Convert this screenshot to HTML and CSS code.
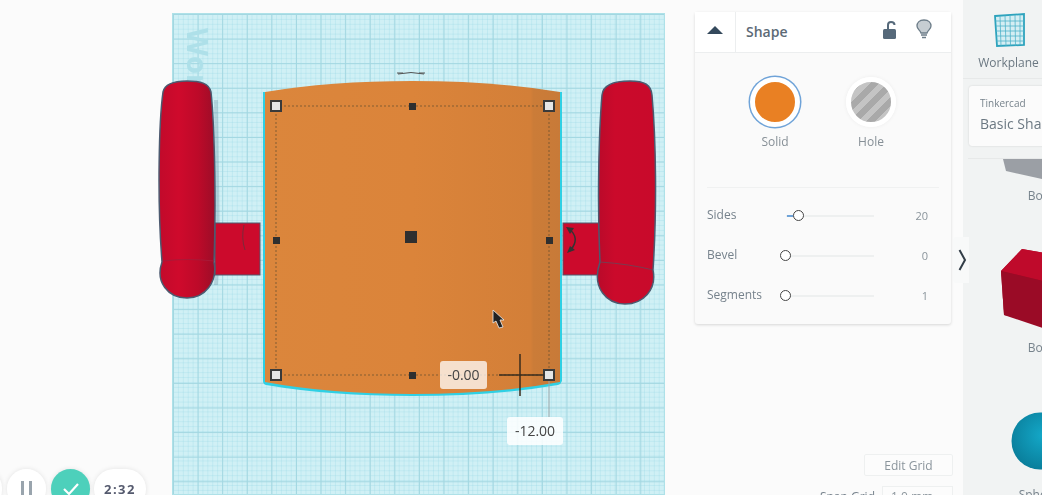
FILE: index.html
```html
<!DOCTYPE html>
<html lang="en">
<head>
  <meta charset="UTF-8" />
  <title>Tinkercad</title>
  <meta name="viewport" content="width=device-width, initial-scale=1.0" />
  <link rel="stylesheet" href="styles.css">
</head>
<body>

<div class="app">

  <!-- workplane canvas -->
  <section class="stage">
    <div class="workplane"></div>

    <svg class="scene" width="695" height="495" viewBox="0 0 695 495">
      <defs>
        <linearGradient id="redLeft" x1="0" x2="1" y1="0" y2="0">
          <stop offset="0" stop-color="#c10a2b" />
          <stop offset="0.35" stop-color="#cf0a2c" />
          <stop offset="0.7" stop-color="#bd0a29" />
          <stop offset="1" stop-color="#9c0d28" />
        </linearGradient>
        <linearGradient id="redRight" x1="0" x2="1" y1="0" y2="0">
          <stop offset="0" stop-color="#b90a2a" />
          <stop offset="0.3" stop-color="#cb0a2b" />
          <stop offset="1" stop-color="#c80a2b" />
        </linearGradient>
        <linearGradient id="orange" x1="0" x2="1" y1="0" y2="0">
          <stop offset="0" stop-color="#db863c" />
          <stop offset="0.5" stop-color="#db843a" />
          <stop offset="0.9" stop-color="#d37f38" />
          <stop offset="0.91" stop-color="#cb7c38" />
          <stop offset="1" stop-color="#c87a38" />
        </linearGradient>
      </defs>

      <text class="plane-label" transform="translate(187,28) rotate(90)">Workplane</text>

      <!-- left wheel and axle -->
      <path class="shade" d="M216 100 L218 250 L216 285" />
      <rect class="axle" x="215" y="223" width="45" height="52" />
      <path class="capsule-l" d="M162 262 C157 200 159 120 163 92 C165 83 175 81 187 81 C200 81 209 83 211 92 C215 130 216 210 214 262 C218 282 205 298 187 298 C168 298 155 282 162 262 Z" />
      <path class="joint soft" d="M163 261 Q187 258 214 261" />

      <!-- right wheel and axle -->
      <rect class="axle" x="563" y="223" width="38" height="52" />
      <path class="capsule-r" d="M600 262 C597 200 599 130 602 95 C603 85 615 81 630 81 C645 81 651 85 652 95 C656 140 657 210 653 270 C657 290 643 304 625 304 C607 304 591 288 600 262 Z" />
      <path class="joint" d="M600 262 Q630 264 653 270" />

      <!-- selected shape -->
      <path class="body-glow" d="M263 92 L412 92 L562 92 L562 381 Q561 384 558 385 Q495 396 412 396 Q330 396 266 385 Q263 384 263 381 Z" />
      <path class="body" d="M265 92 Q330 81 412 81 Q495 81 560 92 L560 382 Q495 394 412 394 Q330 394 265 382 Z" />

      <path class="guide" d="M276 106 H549 M276 106 V375 M549 106 V375 M276 375 H549" />
      <path class="gauge" d="M398 74 Q411 71 424 74 M397 73 H403 M419 73 H425" />
      <path class="rotate-mark" d="M244 225 Q241 238 245 250" />
      <path class="rotate-mark thick" d="M569 229 Q581 238 570 251" />
      <path class="arrow" d="M566 227 L574 228 L570 234 Z M567 253 L575 250 L570 246 Z" />

      <rect class="handle" x="271" y="101" width="10" height="10" />
      <rect class="handle" x="544" y="101" width="10" height="10" />
      <rect class="handle" x="271" y="370" width="10" height="10" />
      <rect class="handle" x="544" y="370" width="10" height="10" />
      <rect class="dot" x="409" y="103" width="7" height="7" />
      <rect class="dot" x="273" y="237" width="7" height="7" />
      <rect class="dot" x="546" y="237" width="7" height="7" />
      <rect class="dot" x="409" y="372" width="7" height="7" />
      <rect class="dot" x="405" y="231" width="12" height="12" />

      <path class="cross" d="M499 375 H544 M520 354 V396" />
      <path class="drop" d="M549 381 V417" />
      <path class="cursor" d="M493 310 L493 323 L496 321 L499 328 L503 327 L500 320 L504 320 Z" />
    </svg>

    <div class="dim dim-x">-0.00</div>
    <div class="dim dim-y">-12.00</div>

    <div class="player">
      <div class="pill round"></div>
      <div class="pill round"><span class="bar"></span><span class="bar"></span></div>
      <div class="pill round done">
        <svg width="18" height="14" viewBox="0 0 18 14"><path d="M2 7 L7 12 L16 2" fill="none" stroke="#fff" stroke-width="2.2" /></svg>
      </div>
      <div class="pill time">2:32</div>
    </div>
  </section>

  <!-- inspector -->
  <section class="inspector">
    <div class="panel">
      <div class="panel-head">
        <div class="caret-cell"><span class="caret"></span></div>
        <div class="panel-title">Shape</div>
        <svg class="head-icon" width="16" height="20" viewBox="0 0 16 20">
          <path d="M6 9 V5 Q6 2 9 2 Q12.500 2 12.500 5" fill="none" stroke="#56697a" stroke-width="2" />
          <rect x="1" y="9" width="13" height="10" rx="1.500" fill="#56697a" />
        </svg>
        <svg class="head-icon bulb" width="16" height="20" viewBox="0 0 16 20">
          <path d="M8 1 C3 1 1 4 1 7 C1 10 4 11 5 14 H11 C12 11 15 10 15 7 C15 4 13 1 8 1 Z" fill="#c6cdd2" stroke="#6d7d89" stroke-width="1.300" />
          <path d="M5 16 H11 M6 18.500 H10" stroke="#6d7d89" stroke-width="1.600" />
        </svg>
      </div>

      <div class="types">
        <div class="type">
          <div class="swatch solid"></div>
          <div class="type-name">Solid</div>
        </div>
        <div class="type">
          <div class="swatch hole"></div>
          <div class="type-name">Hole</div>
        </div>
      </div>

      <div class="params">
        <div class="param">
          <span class="param-name">Sides</span>
          <div class="track"><span class="fill"></span><span class="thumb thumb-sides"></span></div>
          <span class="param-value">20</span>
        </div>
        <div class="param">
          <span class="param-name">Bevel</span>
          <div class="track"><span class="thumb"></span></div>
          <span class="param-value">0</span>
        </div>
        <div class="param">
          <span class="param-name">Segments</span>
          <div class="track"><span class="thumb"></span></div>
          <span class="param-value">1</span>
        </div>
      </div>
    </div>

    <div class="grid-tools">
      <button class="edit-grid">Edit Grid</button>
      <div class="snap">
        <span class="snap-label">Snap Grid</span>
        <span class="snap-select">1.0 mm</span>
      </div>
    </div>
  </section>

  <div class="expander">
    <svg width="9" height="22" viewBox="0 0 9 22"><path d="M1.500 1 L7 11 L1.500 21" fill="none" stroke="#333e48" stroke-width="2" /></svg>
  </div>

  <!-- shape library -->
  <aside class="library">
    <div class="plane-tool">
      <svg width="36" height="36" viewBox="0 0 36 36">
        <path d="M4 4 L33 2 L33 33 L6 34 Z" fill="#d5eef3" stroke="#2ea3bd" stroke-width="1.800" />
        <path d="M9 4 L10 34 M14 3.500 L15 34 M19 3 L19.500 33.500 M24 3 L24.500 33.500 M29 2.500 L29 33 M4.500 9 H33 M5 14 H33 M5 19 H33 M5.500 24 H33 M5.500 29 H33" stroke="#4fb3c9" stroke-width="0.800" />
      </svg>
      <div class="plane-name">Workplane</div>
    </div>

    <div class="library-card">
      <div class="card-brand">Tinkercad</div>
      <div class="card-title">Basic Shapes</div>
    </div>

    <div class="shape-list">
      <div class="shape-item first">
        <svg class="thumb-box" width="60" height="20" viewBox="0 0 60 20">
          <path d="M21 0 H60 V20 L24 12 Z" fill="#9b9fa5" />
        </svg>
        <div class="shape-name">Box</div>
      </div>
      <div class="shape-item second">
        <svg class="thumb-box" width="80" height="84" viewBox="0 0 80 84">
          <path d="M1 24 L22 2 L80 12 V84 L4 68 Z" fill="#a30d28" />
          <path d="M1 24 L22 2 L80 12 L52 36 Z" fill="#bf0a2b" />
          <path d="M1 24 L52 36 V84 L4 68 Z" fill="#9a0b26" />
        </svg>
        <div class="shape-name">Box</div>
      </div>
      <div class="shape-item third">
        <svg class="thumb-box" width="60" height="58" viewBox="0 0 60 58">
          <defs>
            <radialGradient id="ball" cx="0.55" cy="0.4" r="0.6">
              <stop offset="0" stop-color="#14a8c8" />
              <stop offset="1" stop-color="#0a7f9c" />
            </radialGradient>
          </defs>
          <circle cx="29" cy="29" r="28.500" fill="url(#ball)" />
        </svg>
        <div class="shape-name">Sphere</div>
      </div>
    </div>
  </aside>

</div>

</body>
</html>
```

FILE: styles.css
```css
html, body {
  margin: 0;
  height: 100%;
  overflow: hidden;
}
body {
  font-family: 'Open Sans', 'Noto Sans', sans-serif;
  background-color: #fbfbfb;
  color: #6f7c86;
}
.app {
  position: relative;
  display: flex;
  width: 1042px;
  height: 495px;
  overflow: hidden;
  filter: blur(0.5px);
}

/* canvas */
.stage {
  position: relative;
  flex: 0 0 695px;
  height: 495px;
}
.workplane {
  position: absolute;
  left: 172px;
  top: 13px;
  width: 493px;
  height: 482px;
  box-sizing: border-box;
  border: 1px solid #aee1e8;
  background-color: #d0f0f5;
  background-image:
    linear-gradient(to right, #a3d7e1 1px, transparent 1px),
    linear-gradient(to bottom, #a3d7e1 1px, transparent 1px),
    linear-gradient(to right, rgba(160, 220, 232, 0.35) 1px, transparent 1px),
    linear-gradient(to bottom, rgba(160, 220, 232, 0.35) 1px, transparent 1px);
  background-size: 24.6px 24.6px, 24.6px 24.6px, 4.92px 4.92px, 4.92px 4.92px;
}
.scene {
  position: absolute;
  left: 0;
  top: 0;
}
.plane-label {
  font-family: 'Open Sans', sans-serif;
  font-size: 29px;
  font-weight: bold;
  fill: #aee0e9;
}
.shade {
  fill: none;
  stroke: #6d8f9f;
  stroke-width: 4;
  opacity: 0.3;
}
.axle {
  fill: #cc0a2c;
  stroke: #4c5a70;
  stroke-width: 1;
}
.capsule-l {
  fill: url(#redLeft);
  stroke: #4c5a70;
  stroke-width: 1.500;
}
.capsule-r {
  fill: url(#redRight);
  stroke: #4c5a70;
  stroke-width: 1.500;
}
.joint {
  fill: none;
  stroke: #7a3b50;
  stroke-width: 1;
}
.joint.soft {
  stroke: #a81a38;
}
.body-glow {
  fill: #2fd0e4;
}
.body {
  fill: url(#orange);
}
.guide {
  fill: none;
  stroke: #6e5230;
  stroke-width: 1;
  stroke-dasharray: 2 2;
  opacity: 0.8;
}
.gauge {
  fill: none;
  stroke: #555;
  stroke-width: 1;
}
.rotate-mark {
  fill: none;
  stroke: #7a2a3a;
  stroke-width: 1;
}
.rotate-mark.thick {
  stroke: #333;
  stroke-width: 1.500;
}
.arrow {
  fill: #333;
}
.handle {
  fill: #e6e6e6;
  stroke: #3a3a3a;
  stroke-width: 2;
}
.dot {
  fill: #2f2f2f;
}
.cross {
  fill: none;
  stroke: #3a2c1c;
  stroke-width: 1.500;
}
.drop {
  fill: none;
  stroke: #9aa6a9;
  stroke-width: 1;
}
.cursor {
  fill: #222;
  stroke: #eee;
  stroke-width: 0.800;
}
.dim {
  position: absolute;
  height: 28px;
  line-height: 28px;
  text-align: center;
  font-size: 14px;
  color: #444;
  border-radius: 3px;
}
.dim-x {
  left: 440px;
  top: 361px;
  width: 47px;
  background-color: rgba(255, 255, 255, 0.75);
}
.dim-y {
  left: 507px;
  top: 417px;
  width: 56px;
  background-color: rgba(255, 255, 255, 0.85);
}
.player {
  position: absolute;
  left: -36px;
  top: 469px;
  display: flex;
  gap: 5px;
}
.pill {
  display: flex;
  align-items: center;
  justify-content: center;
  height: 40px;
  background-color: white;
  border-radius: 20px;
  box-shadow: 0 0 5px rgba(0,0,0,0.1);
}
.round {
  width: 38px;
  gap: 5px;
}
.pill.round + .pill.round {
  width: 39px;
}
.bar {
  width: 3px;
  height: 16px;
  background-color: #99a4ad;
}
.pill.done {
  width: 40px;
  background-color: #4dd0bb;
}
.time {
  width: 52px;
  margin-left: -1px;
  font-size: 13px;
  font-weight: bold;
  letter-spacing: 1.500px;
  color: #555a6e;
}

/* inspector */
.inspector {
  display: flex;
  flex-direction: column;
  flex: 0 0 268px;
  padding-top: 12px;
  box-sizing: border-box;
}
.panel {
  flex-shrink: 0;
  width: 256px;
  height: 312px;
  background-color: #fafafa;
  border-radius: 3px;
  box-shadow: 0 1px 3px rgba(0,0,0,0.15);
}
.panel-head {
  display: flex;
  align-items: center;
  height: 40px;
  background-color: white;
  border-bottom: 1px solid #eceeef;
}
.caret-cell {
  display: flex;
  align-items: center;
  justify-content: center;
  width: 40px;
  height: 40px;
  border-right: 1px solid #eceeef;
}
.caret {
  width: 0;
  height: 0;
  border-left: 8px solid transparent;
  border-right: 8px solid transparent;
  border-bottom: 8px solid #34495c;
  margin-bottom: 4px;
}
.panel-title {
  flex: 1;
  padding-left: 10px;
  padding-bottom: 2px;
  font-size: 14px;
  font-weight: 600;
  color: #5c6a76;
}
.head-icon {
  margin-right: 18px;
  margin-bottom: 4px;
}
.bulb {
  margin-right: 19px;
  margin-bottom: 6px;
}
.types {
  display: flex;
  justify-content: center;
  gap: 46px;
  height: 135px;
  padding-top: 24px;
  box-sizing: border-box;
  border-bottom: 1px solid #f0f1f1;
  margin: 0 12px;
}
.type {
  display: flex;
  flex-direction: column;
  align-items: center;
  gap: 6px;
  width: 50px;
}
.swatch {
  width: 40px;
  height: 40px;
  border-radius: 50%;
  border: 5px solid white;
  box-shadow: 0 0 0 1.500px #6fa3d8;
}
.swatch.solid {
  background-color: #e98023;
}
.swatch.hole {
  background: repeating-linear-gradient(-45deg, #a9a9a9 0 6px, #c4c4c4 6px 12px);
  box-shadow: 0 0 4px rgba(0,0,0,0.06);
}
.type-name {
  font-size: 12px;
  color: #868f96;
}
.params {
  padding: 8px 12px 0;
}
.param {
  display: flex;
  align-items: center;
  height: 40px;
}
.param-name {
  width: 79px;
  font-size: 12px;
  color: #76828c;
  margin-bottom: 4px;
}
.track {
  position: relative;
  width: 88px;
  height: 2px;
  background-color: #eef0f0;
}
.thumb {
  position: absolute;
  left: -6px;
  top: -5px;
  width: 9px;
  height: 9px;
  border: 1.500px solid #444;
  border-radius: 50%;
  background-color: white;
}
.thumb-sides {
  left: 7px;
}
.fill {
  position: absolute;
  left: 1px;
  top: 0;
  width: 6px;
  height: 2px;
  background-color: #6fa3d8;
}
.param-value {
  flex: 1;
  padding-right: 11px;
  padding-bottom: 1px;
  text-align: right;
  font-size: 11px;
  color: #8a949b;
}
.grid-tools {
  display: flex;
  flex-direction: column;
  flex-shrink: 0;
  align-items: flex-end;
  gap: 10px;
  width: 258px;
  margin-top: 130px;
}
.edit-grid {
  width: 89px;
  height: 22px;
  padding: 0;
  font-family: inherit;
  font-size: 12px;
  color: #8b959c;
  background-color: #fcfcfc;
  border: 1px solid #eef0f0;
  border-radius: 2px;
}
.snap {
  display: flex;
  align-items: center;
  gap: 7px;
  height: 20px;
}
.snap-label {
  font-size: 12px;
  color: #76828c;
}
.snap-select {
  width: 71px;
  height: 20px;
  box-sizing: border-box;
  padding-left: 8px;
  font-size: 12px;
  line-height: 20px;
  color: #8b959c;
  background-color: #fcfcfc;
  border: 1px solid #eef0f0;
}

.expander {
  position: absolute;
  left: 953px;
  top: 237px;
  display: flex;
  align-items: center;
  justify-content: flex-end;
  box-sizing: border-box;
  width: 16px;
  height: 46px;
  padding-right: 2px;
  background-color: #f8f9f9;
  border-radius: 2px 0 0 2px;
  z-index: 2;
}

/* library */
.library {
  flex: 1;
  min-width: 0;
  background-color: #f1f3f3;
  overflow: hidden;
}
.plane-tool {
  display: flex;
  flex-direction: column;
  align-items: center;
  box-sizing: border-box;
  width: 91px;
  height: 79px;
  padding-top: 12px;
  border-bottom: 1px solid #e7e9e9;
}
.plane-name {
  margin-top: 6px;
  font-size: 12px;
  white-space: nowrap;
  color: #6b7882;
}
.library-card {
  box-sizing: border-box;
  width: 120px;
  height: 60px;
  margin: 7px 0 12px 6px;
  padding: 10px 11px;
  background-color: #fbfbfb;
  border-radius: 3px;
  box-shadow: 0 0 2px rgba(0,0,0,0.15);
}
.card-brand {
  font-size: 10px;
  color: #77838c;
}
.card-title {
  margin-top: 4px;
  font-size: 14px;
  white-space: nowrap;
  color: #6b7882;
}
.shape-list {
  border-top: 1px solid #e7e9e9;
  margin-left: 5px;
  width: 160px;
}
.shape-item {
  display: flex;
  flex-direction: column;
  align-items: flex-start;
  width: 141px;
}
.thumb-box {
  display: block;
  flex-shrink: 0;
}
.first .thumb-box {
  margin-left: 14px;
}
.second {
  margin-top: 43px;
}
.second .thumb-box {
  margin-left: 32px;
}
.third {
  margin-top: 56px;
}
.third .thumb-box {
  margin-left: 43px;
}
.shape-name {
  width: 141px;
  margin-top: 8px;
  text-align: center;
  font-size: 12px;
  color: #77838c;
}
.third .shape-name {
  margin-top: 16px;
}
```
